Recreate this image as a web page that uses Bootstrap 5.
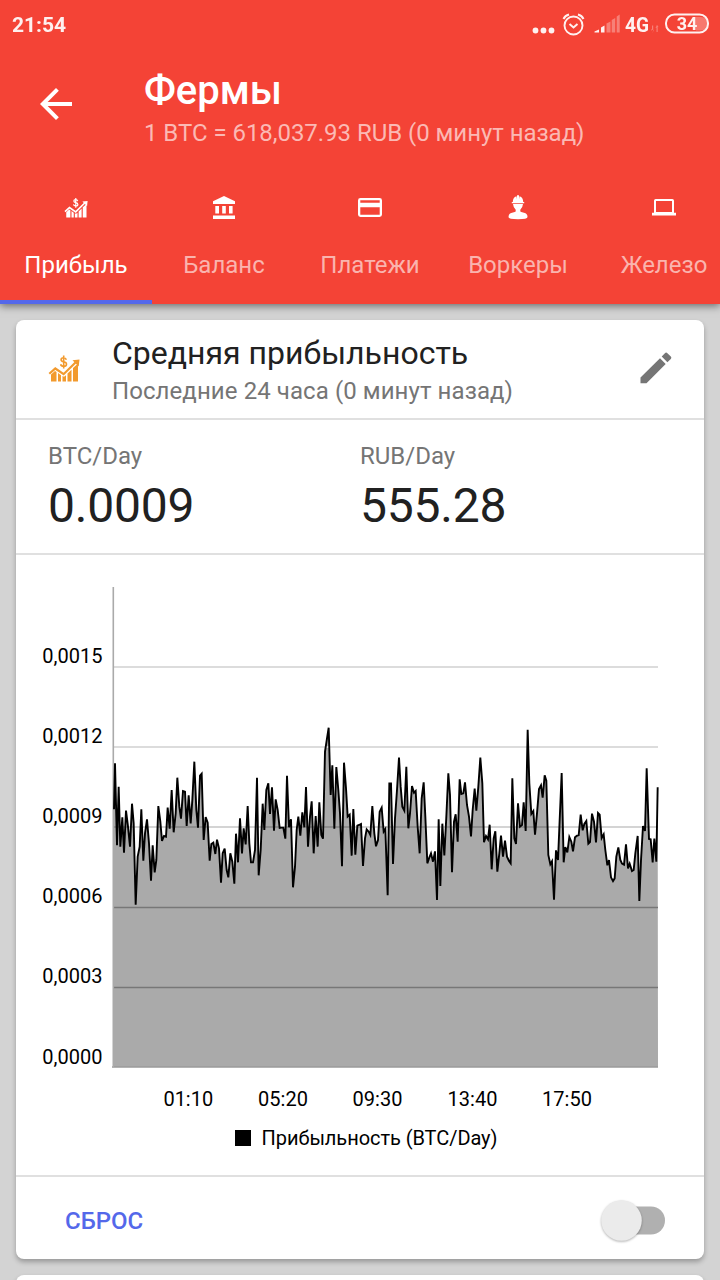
<!DOCTYPE html>
<html lang="ru">
<head>
<meta charset="utf-8">
<meta name="viewport" content="width=device-width, initial-scale=1">
<title>Фермы</title>
<link rel="stylesheet" href="https://cdn.jsdelivr.net/npm/bootstrap@5.3.0/dist/css/bootstrap.min.css">
<style>
body{font-family:Roboto,"Noto Sans",sans-serif;background:#d3d3d3;color:#212121;height:1280px;overflow:hidden;line-height:1.2}
svg{display:block;flex:none}
.app-head{background:#f44336;color:#fff;height:304px;box-shadow:0 2px 8px rgba(0,0,0,.5);position:relative;z-index:2}
.status{height:48px;padding:0 10px 0 12px}
.clock{font-size:21px;font-weight:700;padding-top:4px;opacity:.92}
.toolbar{height:112px;padding-left:32px}
.toolbar-text{margin-left:64px;padding-top:3px}
.app-title{font-size:40px;font-weight:500;line-height:46px;padding-bottom:1px;margin-top:3px}
.rate{font-size:24px;line-height:28px;letter-spacing:-.04px;color:#fbb9b4;white-space:nowrap}
.tabs{height:144px;overflow:hidden}
.tab-item{height:144px;flex:none;font-size:24px;color:#fab4ae;position:relative}
.tab-item svg{margin-top:33px;height:30px}
.tab-item span{margin-top:27px;line-height:30px;white-space:nowrap}
.tab-item.current{color:#fff;border-bottom:4px solid #5468ea}
.w-a{width:152px}.w-b{width:144px}.w-c{width:148px}
.panel{border:0;border-radius:8px;margin:16px 16px 0;box-shadow:0 3px 5px rgba(0,0,0,.28)}
.panel-main{height:939px}
.line{border-bottom:2px solid #e0e0e0}
.p-head{height:100px;padding-left:32px}
.p-title{font-size:32px;line-height:38px;white-space:nowrap}
.p-sub{margin-top:5px;letter-spacing:.08px}
.muted{font-size:24px;line-height:28px;color:#757575;white-space:nowrap}
.stats{height:135px;padding:22px 0 0 32px}
.stats>div{width:312px}
.num{font-size:48px;line-height:56px;margin-top:8px;letter-spacing:-.2px}
.chart{height:622px}
.chart text{font-size:20px;fill:#000}
.foot{height:82px;padding:5px 39px 0 49px}
.reset{font-size:24px;font-weight:500;color:#5468ea;border:0;padding:0;line-height:28px}
</style>
</head>
<body>
<header class="app-head">
  <div class="status d-flex align-items-center justify-content-between">
    <div class="clock">21:54</div>
    <svg width="190" height="48" viewBox="520 0 190 48" fill="none" stroke="#fff" opacity=".93">
      <g fill="#fff" stroke="none"><circle cx="535.500" cy="30.500" r="2.900"/><circle cx="543.500" cy="30.500" r="2.900"/><circle cx="551.500" cy="30.500" r="2.900"/></g>
      <circle cx="573.500" cy="25.500" r="9" stroke-width="1.900"/>
      <path d="M569.500 24l4 3.500 4-3.500M563.500 19q1.500-3.500 5.500-4.500M578 14.500q4 1 5.500 4.500" stroke-width="2"/>
      <g fill="#fff" stroke="none"><path d="M594.500 32.500v-1l4.500-2v3zM601 32.500v-5l3.500-2v7z"/><path opacity=".35" d="M606.500 32.500v-9l4-2v11zM611.700 32.500V20l3.500-2v14.500zM616.700 32.500V16.500l3-2v18zM652 25.500h1.200v6.500h-1.200zM656.500 25.500h1.200v6.500h-1.200zM651 29l1.500 3.500 1.500-2zM655.500 28l1.500-3 1.500 2z"/><path opacity=".3" d="M696 17h5q7 0 7 6.500t-7 7h-5z"/></g>
      <text x="625" y="31.500" font-size="20" font-weight="700" fill="#fff" stroke="none" textLength="24" lengthAdjust="spacingAndGlyphs">4G</text>
      <rect x="666" y="14.500" width="42" height="18" rx="8.500" stroke-width="2"/>
      <text x="687" y="30.300" text-anchor="middle" font-size="18" font-weight="700" fill="#fff" stroke="none">34</text>
    </svg>
  </div>
  <div class="toolbar d-flex align-items-center">
    <svg width="48" height="48" viewBox="0 0 24 24" fill="#fff"><path d="M20 11H7.830l5.590-5.590L12 4l-8 8 8 8 1.410-1.410L7.830 13H20v-2z"/></svg>
    <div class="toolbar-text">
      <div class="app-title">Фермы</div>
      <div class="rate mt-1">1 BTC = 618,037.93 RUB (0 минут назад)</div>
    </div>
  </div>
  <nav class="tabs d-flex flex-nowrap">
    <div class="tab-item current w-a d-flex flex-column align-items-center">
      <svg width="24" viewBox="0 0 32 40"><use href="#profit"/></svg><span>Прибыль</span>
    </div>
    <div class="tab-item w-b d-flex flex-column align-items-center">
      <svg width="24" viewBox="0 0 24 30" fill="#fff"><path d="M12 3L1 8.300V11h22V8.300zM3.300 13H7v7.500H3.300zM10.200 13h3.600v7.500h-3.600zM17 13h3.600v7.500H17zM1 22.500h22V26H1z"/></svg><span>Баланс</span>
    </div>
    <div class="tab-item w-c d-flex flex-column align-items-center">
      <svg width="24" viewBox="0 0 24 30"><path fill="#fff" fill-rule="evenodd" d="M2.500 5h19Q24 5 24 7.400v14.200Q24 24 21.500 24h-19Q0 24 0 21.600V7.400Q0 5 2.500 5zM2.300 7.200v2.500h19.400V7.200zM2.300 14.300v7.400h19.400v-7.400z"/></svg><span>Платежи</span>
    </div>
    <div class="tab-item w-c d-flex flex-column align-items-center">
      <svg width="24" viewBox="0 0 24 30" fill="#fff"><path d="M5.800 10.200V9h1q0-4.500 3.700-5.800l.5 3V2.300h2v3.900l.5-3Q17.200 4.500 17.200 9h1v1.200zM7 11.100h10q-.3 3.600-2.700 5.700v1.100q0 .8 1 1.100l3.500 1.100Q21.500 21 21.500 24q0 2.200-9.500 2.200T2.500 24q0-3 2.700-3.900L8.700 19q1-.3 1-1.100v-1.100Q7.300 14.700 7 11.100z"/></svg><span>Воркеры</span>
    </div>
    <div class="tab-item w-b d-flex flex-column align-items-center">
      <svg width="24" viewBox="0 0 24 30"><path fill="#fff" fill-rule="evenodd" d="M3.700 6h16.600Q22 6 22 7.700v12.100h2v2.700H0v-2.700h2V7.700Q2 6 3.700 6zM4 8v11h16V8z"/></svg><span>Железо</span>
    </div>
  </nav>
</header>

<main>
<section class="card panel panel-main">
  <div class="p-head line d-flex align-items-center">
    <svg width="32" height="40" viewBox="0 0 32 40" color="#f29a2e">
      <defs><g id="profit" fill="currentColor" stroke="none" transform="translate(0 -1.500)">
        <path d="M3 27l4-3.500 1.500 1V34H3zM10 25.500l3 2.300V34h-3zM14.500 28.500l1.500.8 2-1.600V34h-3.500zM19.500 26l4-3.800V34h-4zM25 20.500l5-4.500v18h-5z"/>
        <path d="M1.300 26.300L7.300 21l8.300 5.700L28 14.500" fill="none" stroke="currentColor" stroke-width="2.200"/>
        <path d="M24.500 12.700l7-.7-.8 7z"/>
        <path d="M18.300 12.200q-.5-2-2.700-2-2.500 0-2.500 2 0 1.600 2.500 2.100 2.900.5 2.900 2.400 0 2.100-2.900 2.100-2.500 0-3-2.100M15.700 8v13" fill="none" stroke="currentColor" stroke-width="1.600"/>
      </g></defs>
      <use href="#profit"/>
    </svg>
    <div style="margin-left:32px">
      <div class="p-title">Средняя прибыльность</div>
      <div class="muted p-sub">Последние 24 часа (0 минут назад)</div>
    </div>
    <svg class="ms-auto me-4" width="48" height="48" viewBox="632 345 48 48" fill="#757575"><path d="M640.500 377.500l19.500-19.300 5.700 5.700-19.200 19.300h-6zM661.700 356.500l3.200-3.300q1.200-1.200 2.500 0l3.400 3.300q1.200 1.200 0 2.500l-3.400 3.200z"/></svg>
  </div>
  <div class="stats line d-flex">
    <div><div class="muted">BTC/Day</div><div class="num">0.0009</div></div>
    <div><div class="muted">RUB/Day</div><div class="num">555.28</div></div>
  </div>
  <div class="chart line">
    <svg width="688" height="620" viewBox="16 555 688 620">
      <path id="area" fill="#aaa"/>
      <path d="M113 667H658M113 747H658" stroke="#dcdcdc" stroke-width="2"/>
      <path d="M113 827H658" stroke="#000" stroke-opacity=".17" stroke-width="2"/>
      <path d="M113 907.500H658M113 987.500H658" stroke="#777" stroke-width="1.300"/>
      <path d="M112 1067H658" stroke="#9a9a9a" stroke-width="1.500"/>
      <path d="M113.300 587V1067" stroke="#aaa" stroke-width="1.600"/>
      <path id="series" fill="none" stroke="#000" stroke-width="1.900"/>
      <g text-anchor="end"><text x="102.500" y="663">0,0015</text><text x="102.500" y="743">0,0012</text><text x="102.500" y="823">0,0009</text><text x="102.500" y="903">0,0006</text><text x="102.500" y="983">0,0003</text><text x="102.500" y="1063.500">0,0000</text></g>
      <g text-anchor="middle"><text x="188.300" y="1106">01:10</text><text x="283" y="1106">05:20</text><text x="377.500" y="1106">09:30</text><text x="472.500" y="1106">13:40</text><text x="567" y="1106">17:50</text></g>
      <rect x="235" y="1130" width="16" height="16"/>
      <text x="261.500" y="1145" textLength="236">Прибыльность (BTC/Day)</text>
    </svg>
  </div>
  <div class="foot d-flex align-items-center justify-content-between">
    <button class="btn reset">СБРОС</button>
    <svg width="66" height="50" viewBox="599 1195.500 66 50" overflow="visible"><rect x="612" y="1206" width="53" height="28" rx="14" fill="#b0b0b0"/><circle cx="621.500" cy="1220" r="20.300" fill="#ebebeb" style="filter:drop-shadow(0 1.500px 1px rgba(0,0,0,.3))"/></svg>
  </div>
</section>
<section class="card panel" style="height:60px"></section>
</main>

<script src="https://cdn.jsdelivr.net/npm/bootstrap@5.3.0/dist/js/bootstrap.bundle.min.js"></script>
<script>
// Samples as "x,y" pairs in thirds of a pixel, grouped by the x offset of each part
const parts = [
 [0,"12,298 15,160 21,406 26,230 31,410 37,322 42,428 48,302 54,350 60,410 66,281 71,340 77,584 83,440 89,410 94,298 100,452 105,370 111,328 117,400 123,512 128,406 134,487 139,450 145,288 151,335 156,393 162,378 168,380 173,293 179,356 185,240 191,367 197,310 202,203 208,290 213,326 219,243 225,245 230,348 236,256 242,340 247,270 253,155 259,300 264,353 270,197 275,191 281,390 287,321 293,338 299,452 304,402 310,398 316,432 321,389 327,415 333,518 338,430 344,416 350,480 355,502 361,430 367,455 373,521 378,371 384,457 390,325"],
 [390,"6,430 11,355 17,403 23,288 28,400 33,457 39,457 45,420 51,203 56,496 62,420 68,281 73,360 79,240 85,220 90,312 96,232 102,362 107,268 113,300 119,354 125,353 130,353 136,386 141,197 147,352 153,328 159,532 165,470 170,360 175,320 181,377 187,307 193,352 198,231 204,410 210,320 215,274 221,430 227,318 233,410 238,277 244,375 249,386 255,125 261,85 266,53 272,255 277,166 283,356 289,171 295,240 300,310 306,469 312,158 318,235 323,320 329,314 335,437 340,297 346,434 352,347 357,345 363,342 369,468 375,385 380,358 386,365 391,375 397,288 403,370"],
 [795,"3,409 9,390 14,305 20,293 26,365 31,357 38,556 43,220 48,220 54,462 60,325 66,240 72,143 77,230 82,290 88,302 94,170 100,355 105,310 111,228 117,248 122,243 128,350 134,430 140,265 146,217 151,320 157,460 162,445 168,430 174,455 180,424 186,570 191,328 196,528 202,341 208,436 214,320 220,190 225,255 231,487 237,335 242,313 248,395 254,208 259,252 265,250 270,217 276,285 282,320 288,379 293,300 299,236 304,302 310,230 316,143 322,220 327,397 333,378 339,388 344,344 350,478 356,385 361,364 367,485 373,430 378,377 384,440 390,392 396,440 402,453"],
 [1200,"2,460 7,205 13,385 18,402 24,280 30,350 36,345 41,277 47,363 53,59 58,220 64,312 70,303 75,374 81,310 87,237 93,226 98,263 104,196 109,212 115,435 121,463 126,454 132,569 138,421 144,450 149,330 155,189 161,457 166,411 172,427 178,381 184,395 189,424 195,382 201,377 206,376 212,314 218,361 223,342 229,333 235,401 240,396 246,311 252,335 258,397 264,309 269,314 275,384 281,373 286,420 292,466 297,450 303,502 309,513 314,505 319,440 325,412 331,450 336,461 342,464 348,403 354,475 359,461 366,483 371,480 376,430 383,378 388,573 393,450 399,348 405,363 410,175 417,387 422,388 428,457 433,386 439,455 443,232"]
];
const pts = parts.flatMap(([dx, s]) => s.split(" ").map(p => {
  const [x, y] = p.split(",").map(Number);
  return (110 + (x + dx) / 3).toFixed(2) + " " + (710 + y / 3).toFixed(2);
}));
const d = "M" + pts.join("L");
document.getElementById("series").setAttribute("d", d);
document.getElementById("area").setAttribute("d", d + "L658 1067L113 1067Z");
</script>
</body>
</html>
